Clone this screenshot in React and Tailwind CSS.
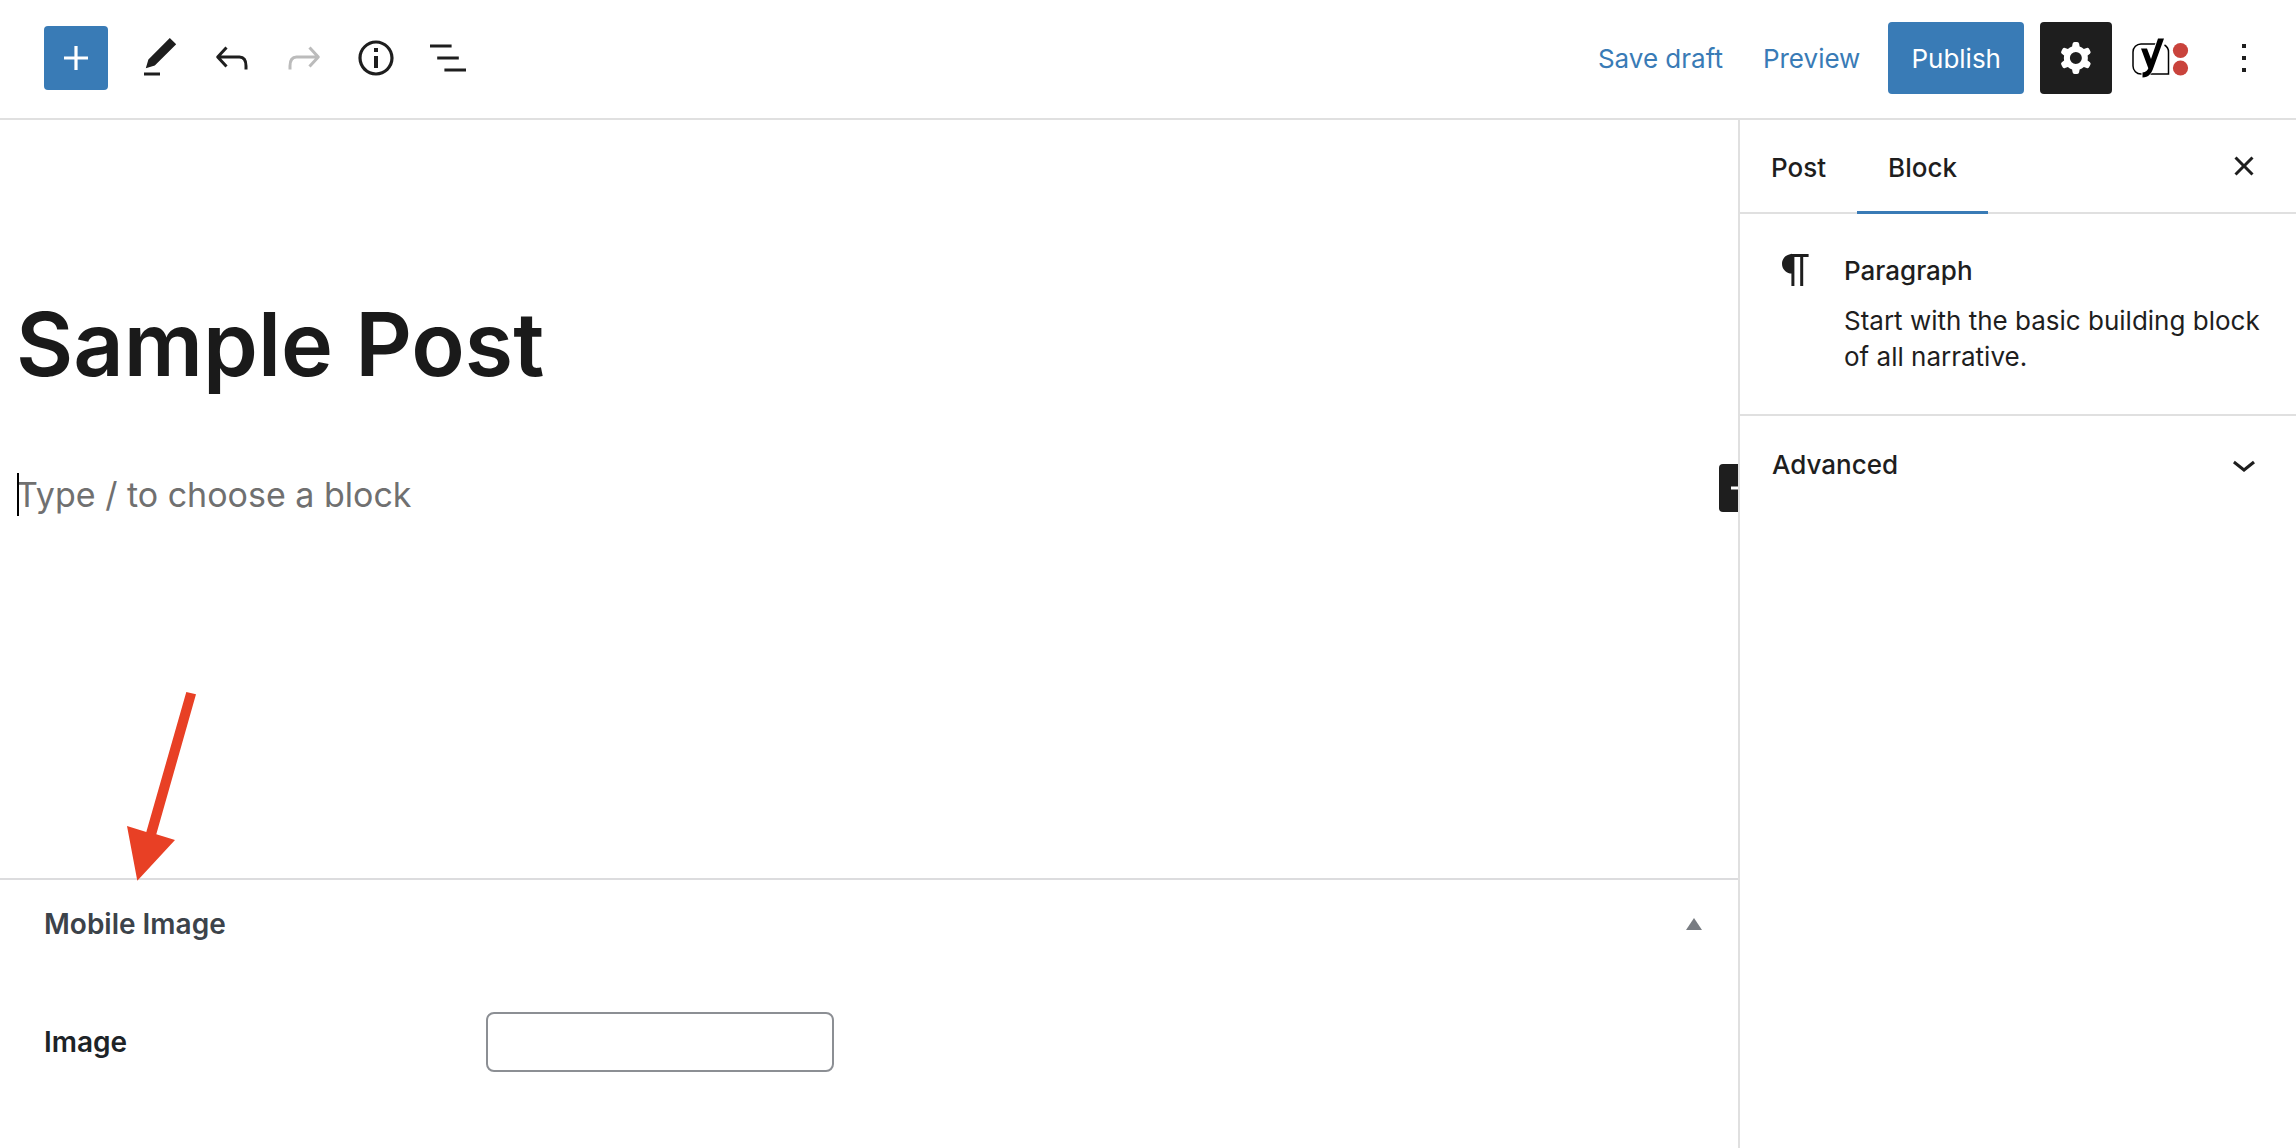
function Icon({ d, className = "size-12" }) {
  return (
    <svg viewBox="0 0 24 24" className={className} fill="currentColor" aria-hidden="true">
      <path d={d} />
    </svg>
  );
}

const icons = {
  plus: "M18 11.2h-5.2V6h-1.6v5.2H6v1.6h5.2V18h1.6v-5.2H18z",
  edit: "M20.1 5.1L16.9 2 6.2 12.7l-1.3 4.4 4.5-1.3L20.1 5.1zM4 20.8h8v-1.5H4v1.5z",
  info: "M12 3.2c-4.8 0-8.8 3.9-8.8 8.8 0 4.8 3.9 8.8 8.8 8.8 4.8 0 8.8-3.9 8.8-8.8 0-4.8-4-8.8-8.8-8.8zm0 16c-4 0-7.2-3.3-7.2-7.2C4.8 8 8 4.8 12 4.8s7.2 3.3 7.2 7.2c0 4-3.2 7.2-7.2 7.2zM11 17h2v-6h-2v6zm0-8h2V7h-2v2z",
  list: "M13.8 5.2H3v1.5h10.8V5.2zm-3.6 12v1.5H21v-1.5H10.2zm7.2-6H6.6v1.5h10.8v-1.5z",
  more: "M13 19h-2v-2h2v2zm0-6h-2v-2h2v2zm0-6h-2V5h2v2z",
  close: "M12 13.06l3.712 3.713 1.061-1.06L13.061 12l3.712-3.712-1.06-1.06L12 10.938 8.288 7.227l-1.061 1.06L10.939 12l-3.712 3.712 1.06 1.061L12 13.061z",
  paragraph: "M18.3 4H9.9v-.1l-.9.2c-2.3.4-4 2.4-4 4.8s1.7 4.4 4 4.8l.7.1V20h1.5V5.5h2.9V20h1.5V5.5h2.7V4z",
  chevron: "M17.5 11.6L12 16l-5.5-4.4.9-1.2L12 14l4.5-3.6 1 1.2z",
};

function HistoryArrow({ d }) {
  return (
    <svg viewBox="0 0 48 48" className="size-12" fill="none" stroke="currentColor" strokeWidth="3" strokeLinejoin="round" aria-hidden="true">
      <path d={d} />
    </svg>
  );
}

const tools = [
  { label: "Tools", glyph: <Icon d={icons.edit} /> },
  { label: "Undo", glyph: <HistoryArrow d="M18.500 13.500L9.700 23l8.800 9.500M9.700 23H31.500C36 23 38 26.500 38 32v3.500" /> },
  { label: "Redo", glyph: <HistoryArrow d="M29.500 13.500L38.300 23l-8.800 9.500M38.300 23H16.500C12 23 10 26.500 10 32v3.500" />, disabled: true },
  { label: "Details", glyph: <Icon d={icons.info} /> },
  { label: "List View", glyph: <Icon d={icons.list} /> },
];

function Gear() {
  return (
    <svg viewBox="0 0 24 24" className="size-12" fill="currentColor" fillRule="evenodd" aria-hidden="true">
      <path d="M10.289 4.836A1 1 0 0111.275 4h1.306a1 1 0 01.987.836l.244 1.466c.787.26 1.503.679 2.108 1.218l1.393-.522a1 1 0 011.216.437l.653 1.13a1 1 0 01-.23 1.273l-1.148.944a6.025 6.025 0 010 2.435l1.149.946a1 1 0 01.23 1.272l-.653 1.13a1 1 0 01-1.216.437l-1.394-.522c-.605.54-1.32.958-2.108 1.218l-.244 1.466a1 1 0 01-.987.836h-1.306a1 1 0 01-.986-.836l-.244-1.466a5.995 5.995 0 01-2.108-1.218l-1.394.522a1 1 0 01-1.217-.436l-.653-1.131a1 1 0 01.23-1.272l1.149-.946a6.026 6.026 0 010-2.435l-1.148-.944a1 1 0 01-.23-1.272l.653-1.131a1 1 0 011.217-.437l1.393.522a5.994 5.994 0 012.108-1.218l.244-1.466zM14.929 12a3 3 0 11-6 0 3 3 0 016 0z" />
    </svg>
  );
}

function YoastMark() {
  return (
    <svg viewBox="0 0 58 44" className="h-11 w-[58px]" fill="none" aria-hidden="true">
      <path d="M25 8H9a8 8 0 0 0-8 8v14a8 8 0 0 0 8 8h27.500V16a8 8 0 0 0-4-7" stroke="#000" strokeWidth="1.500" />
      <path d="M9 12.500h6l4 10.500L26 2.500H32L21.500 31.500c-2.200 6.300-4.800 10-11 10v-5c3.500-.3 5-1.900 5.800-4.200z" fill="#000" stroke="#fff" strokeWidth="2" paintOrder="stroke" />
      <circle cx="48.500" cy="14.500" r="7.600" fill="#c9433c" />
      <circle cx="48.500" cy="32" r="7.600" fill="#c9433c" />
    </svg>
  );
}

function Header() {
  return (
    <header className="flex items-center justify-between border-b-2 border-[#e0e0e0] pt-[22px] pr-7 pb-6 pl-11 text-[#1e1e1e]">
      <div className="flex items-center gap-6">
        <button aria-label="Add block" className="mr-1 flex size-16 items-center justify-center rounded bg-[#397bb6] text-white">
          <Icon d={icons.plus} />
        </button>
        {tools.map((t) => (
          <button key={t.label} aria-label={t.label} disabled={t.disabled} className="disabled:text-[#bbb]">
            {t.glyph}
          </button>
        ))}
      </div>
      <div className="flex items-center text-[26px]">
        <button className="mr-10 text-[#397bb6]">Save draft</button>
        <button className="mr-7 text-[#397bb6]">Preview</button>
        <button className="mr-4 h-18 rounded bg-[#397bb6] px-[23px] text-white">Publish</button>
        <button aria-label="Settings" className="mr-5 flex size-18 items-center justify-center rounded bg-[#1e1e1e] text-white">
          <Gear />
        </button>
        <button aria-label="Yoast SEO" className="mr-[30px]">
          <YoastMark />
        </button>
        <button aria-label="Options">
          <Icon d={icons.more} />
        </button>
      </div>
    </header>
  );
}

function Editor() {
  return (
    <section className="relative flex-1 overflow-hidden px-4 pt-[166px]">
      <h1 className="text-[88px] leading-[116px] font-semibold text-[#1a1a1a]">Sample Post</h1>
      <div className="relative mt-[68px]">
        <input
          aria-label="Empty block"
          placeholder="Type / to choose a block"
          className="block h-12 w-full text-[34px] outline-none placeholder:text-[#707070]"
        />
        <span className="absolute top-[3px] left-px h-[43px] w-0.5 bg-black" />
      </div>
      <button aria-label="Add block" className="absolute top-[344px] -right-[29px] flex size-12 items-center justify-center rounded bg-[#1e1e1e] text-white">
        <Icon d={icons.plus} />
      </button>
    </section>
  );
}

function MetaBox() {
  return (
    <section className="border-t-2 border-[#dcdcde] px-11 pb-[76px] text-[28px] leading-9 font-semibold">
      <div className="flex items-center justify-between py-[26px] text-[#3c434a]">
        <h2>Mobile Image</h2>
        <button aria-label="Toggle panel" className="-mr-4 flex size-8 items-center justify-center">
          <svg viewBox="0 0 16 12" className="h-3 w-4 fill-[#787c82]" aria-hidden="true">
            <path d="M8 0l8 12H0z" />
          </svg>
        </button>
      </div>
      <div className="mt-11 flex items-center text-[#1d2327]">
        <label htmlFor="mobile-image" className="w-[442px]">
          Image
        </label>
        <input id="mobile-image" type="text" className="h-[60px] w-[348px] rounded-lg border-2 border-[#8c8f94] px-4" />
      </div>
    </section>
  );
}

function Sidebar() {
  return (
    <aside className="w-[558px] shrink-0 border-l-2 border-[#e0e0e0] text-[26px] text-[#1e1e1e]">
      <div className="flex h-[94px] items-stretch justify-between border-b-2 border-[#e0e0e0] pr-7">
        <div role="tablist" className="-mb-0.5 flex font-medium">
          <button role="tab" aria-selected="false" className="px-[31px]">
            Post
          </button>
          <button role="tab" aria-selected="true" className="border-b-3 border-[#397bb6] px-[31px] pt-[3px]">
            Block
          </button>
        </div>
        <button aria-label="Close settings">
          <Icon d={icons.close} />
        </button>
      </div>
      <div className="flex gap-6 border-b-2 border-[#e0e0e0] py-8 pr-6 pl-8">
        <Icon d={icons.paragraph} className="size-12 shrink-0" />
        <div className="py-[7px]">
          <h2 className="leading-9 font-medium">Paragraph</h2>
          <p className="mt-3.5 leading-9">Start with the basic building block of all narrative.</p>
        </div>
      </div>
      <button className="flex w-full items-center justify-between py-6 pr-7 pl-8 font-medium">
        Advanced
        <Icon d={icons.chevron} />
      </button>
    </aside>
  );
}

export default function App() {
  return (
    <div className="flex min-h-screen flex-col bg-white font-['Inter',sans-serif]">
      <Header />
      <div className="flex flex-1">
        <main className="relative flex min-w-0 flex-1 flex-col">
          <Editor />
          <MetaBox />
          <svg viewBox="0 0 70 189" className="pointer-events-none absolute bottom-[267px] left-[127px] h-[189px] w-[70px] text-[#e84025]" fill="currentColor" aria-hidden="true">
            <path d="M59.300 0l9.700 2.300L29.300 142.300 48 148 10.300 188.700 0 134l19.300 6z" />
          </svg>
        </main>
        <Sidebar />
      </div>
    </div>
  );
}
